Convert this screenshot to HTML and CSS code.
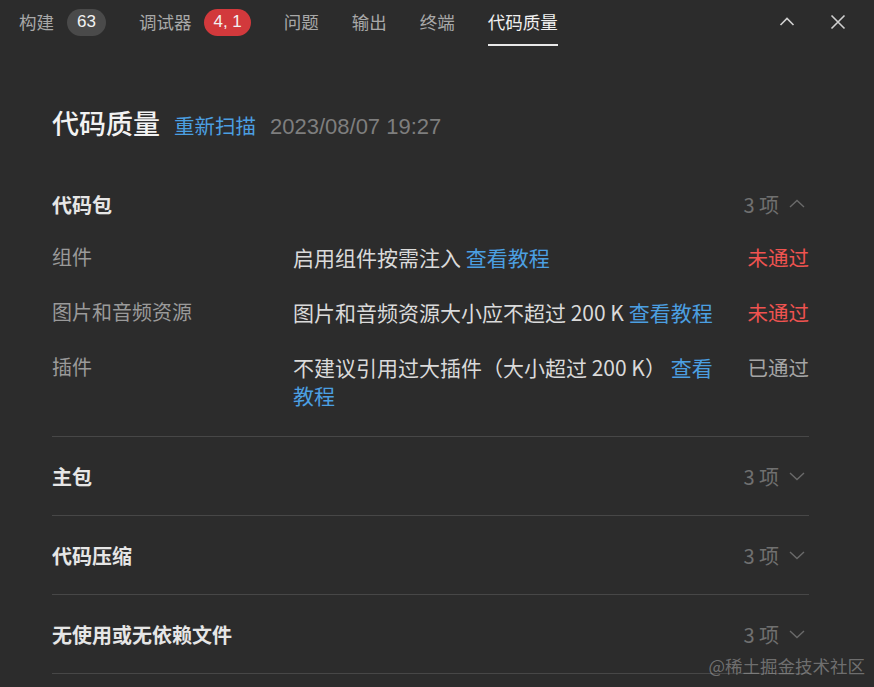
FILE: index.html
```html
<!DOCTYPE html>
<html lang="zh">
<head>
<meta charset="utf-8">
<link rel="stylesheet" href="styles.css">
</head>
<body>
<div class="page">
  <header class="tabbar">
    <nav class="tabs">
      <div class="tab">构建<span class="badge badge-gray">63</span></div>
      <div class="tab">调试器<span class="badge badge-red">4, 1</span></div>
      <div class="tab">问题</div>
      <div class="tab">输出</div>
      <div class="tab">终端</div>
      <div class="tab active">代码质量</div>
    </nav>
    <div class="actions">
      <svg class="icon" width="20" height="20" viewBox="0 0 20 20"><path d="M3.5 13 L10 6.5 L16.5 13" fill="none" stroke="#d0d0d0" stroke-width="1.6"/></svg>
      <svg class="icon" width="20" height="20" viewBox="0 0 20 20"><path d="M3.5 3.5 L16.5 16.5 M16.5 3.5 L3.5 16.5" fill="none" stroke="#d0d0d0" stroke-width="1.6"/></svg>
    </div>
  </header>

  <main class="content">
    <div class="title-line">
      <h1 class="title">代码质量</h1>
      <a class="link rescan">重新扫描</a>
      <span class="date">2023/08/07 19:27</span>
    </div>

    <section class="section first">
      <div class="section-head">
        <span class="section-name">代码包</span>
        <span class="count">3 项<svg class="chev" width="16" height="16" viewBox="0 0 16 16"><path d="M1 11 L8 4.5 L15 11" fill="none" stroke="#6a6a6a" stroke-width="1.4"/></svg></span>
      </div>
      <div class="rows">
        <div class="row">
          <span class="label">组件</span>
          <span class="desc">启用组件按需注入 <a class="link">查看教程</a></span>
          <span class="status fail">未通过</span>
        </div>
        <div class="row">
          <span class="label">图片和音频资源</span>
          <span class="desc">图片和音频资源大小应不超过 200 K <a class="link">查看教程</a></span>
          <span class="status fail">未通过</span>
        </div>
        <div class="row">
          <span class="label">插件</span>
          <span class="desc">不建议引用过大插件（大小超过 200 K） <a class="link">查看教程</a></span>
          <span class="status pass">已通过</span>
        </div>
      </div>
    </section>

    <section class="section">
      <div class="section-head">
        <span class="section-name">主包</span>
        <span class="count">3 项<svg class="chev" width="16" height="16" viewBox="0 0 16 16"><path d="M1 5 L8 11.5 L15 5" fill="none" stroke="#6a6a6a" stroke-width="1.4"/></svg></span>
      </div>
    </section>

    <section class="section">
      <div class="section-head">
        <span class="section-name">代码压缩</span>
        <span class="count">3 项<svg class="chev" width="16" height="16" viewBox="0 0 16 16"><path d="M1 5 L8 11.5 L15 5" fill="none" stroke="#6a6a6a" stroke-width="1.4"/></svg></span>
      </div>
    </section>

    <section class="section">
      <div class="section-head">
        <span class="section-name">无使用或无依赖文件</span>
        <span class="count">3 项<svg class="chev" width="16" height="16" viewBox="0 0 16 16"><path d="M1 5 L8 11.5 L15 5" fill="none" stroke="#6a6a6a" stroke-width="1.4"/></svg></span>
      </div>
    </section>
  </main>

  <div class="watermark">@稀土掘金技术社区</div>
</div>
</body>
</html>
```

FILE: styles.css
```css
* { box-sizing: border-box; }
html, body {
  margin: 0;
  padding: 0;
  background: #2c2c2c;
}
body {
  font-family: "Noto Sans CJK SC", "Noto Sans", "Liberation Sans", sans-serif;
  color: #dcdcdc;
  width: 874px;
  height: 687px;
  overflow: hidden;
}
.page {
  position: relative;
  width: 874px;
  height: 687px;
}
.tabbar {
  height: 46px;
  display: flex;
  align-items: stretch;
  justify-content: space-between;
  padding: 0 26px 0 19px;
}
.tabs {
  display: flex;
  align-items: stretch;
  gap: 33px;
}
.tab {
  display: flex;
  align-items: center;
  font-size: 17.5px;
  color: #a8a8a8;
  line-height: 24px;
  position: relative;
  margin-top: -2px;
}
.tab.active {
  color: #f0f0f0;
}
.tab.active::after {
  content: "";
  position: absolute;
  left: 0;
  right: 0;
  bottom: 0;
  height: 2px;
  background: #e8e8e8;
}
.badge {
  display: inline-flex;
  align-items: center;
  justify-content: center;
  height: 27px;
  border-radius: 14px;
  margin-left: 13px;
  font-family: "Liberation Sans", "Noto Sans", sans-serif;
  font-size: 17px;
  color: #f2f2f2;
  padding: 0 10px;
}
.badge-gray { background: #4a4a4a; min-width: 38px; }
.badge-red { background: #d2393c; min-width: 46px; padding: 0 9px; }
.actions {
  display: flex;
  align-items: center;
  gap: 31px;
  margin-top: -2px;
}
.icon { display: block; }

.content {
  padding: 59px 65px 0 52px;
}
.title-line {
  display: flex;
  align-items: baseline;
  height: 36px;
}
.title {
  margin: 0;
  font-size: 27px;
  font-weight: 500;
  color: #f2f2f2;
  line-height: 36px;
}
.link {
  color: #4b9fe1;
  text-decoration: none;
}
.rescan {
  font-size: 20.5px;
  margin-left: 14px;
}
.date {
  font-family: "Liberation Sans", "Noto Sans", sans-serif;
  font-size: 22px;
  color: #7e7e7e;
  margin-left: 14px;
}
.section {
  padding: 25px 0 25px;
  border-bottom: 1px solid #474747;
}
.section.first {
  margin-top: 24px;
  padding-bottom: 27px;
}
.section-head {
  display: flex;
  justify-content: space-between;
  align-items: center;
  height: 28px;
}
.section-name {
  font-size: 20px;
  font-weight: 700;
  color: #e6e6e6;
}
.count {
  display: flex;
  align-items: center;
  gap: 10px;
  font-size: 20px;
  color: #707070;
  padding-right: 4px;
}
.chev { display: block; }
.rows {
  margin-top: 25px;
  display: flex;
  flex-direction: column;
  gap: 27px;
}
.row {
  display: grid;
  grid-template-columns: 241px 1fr auto;
  font-size: 21px;
  line-height: 28px;
}
.label { color: #9a9a9a; font-size: 20px; }
.desc { color: #dadada; }
.status { text-align: right; padding-left: 26px; font-size: 20.5px; }
.status.fail { color: #ef5350; }
.status.pass { color: #a5a5a5; }

.watermark {
  position: absolute;
  right: 9px;
  bottom: 10px;
  font-size: 17.5px;
  color: rgba(170, 170, 170, 0.55);
  line-height: 22px;
}
```
